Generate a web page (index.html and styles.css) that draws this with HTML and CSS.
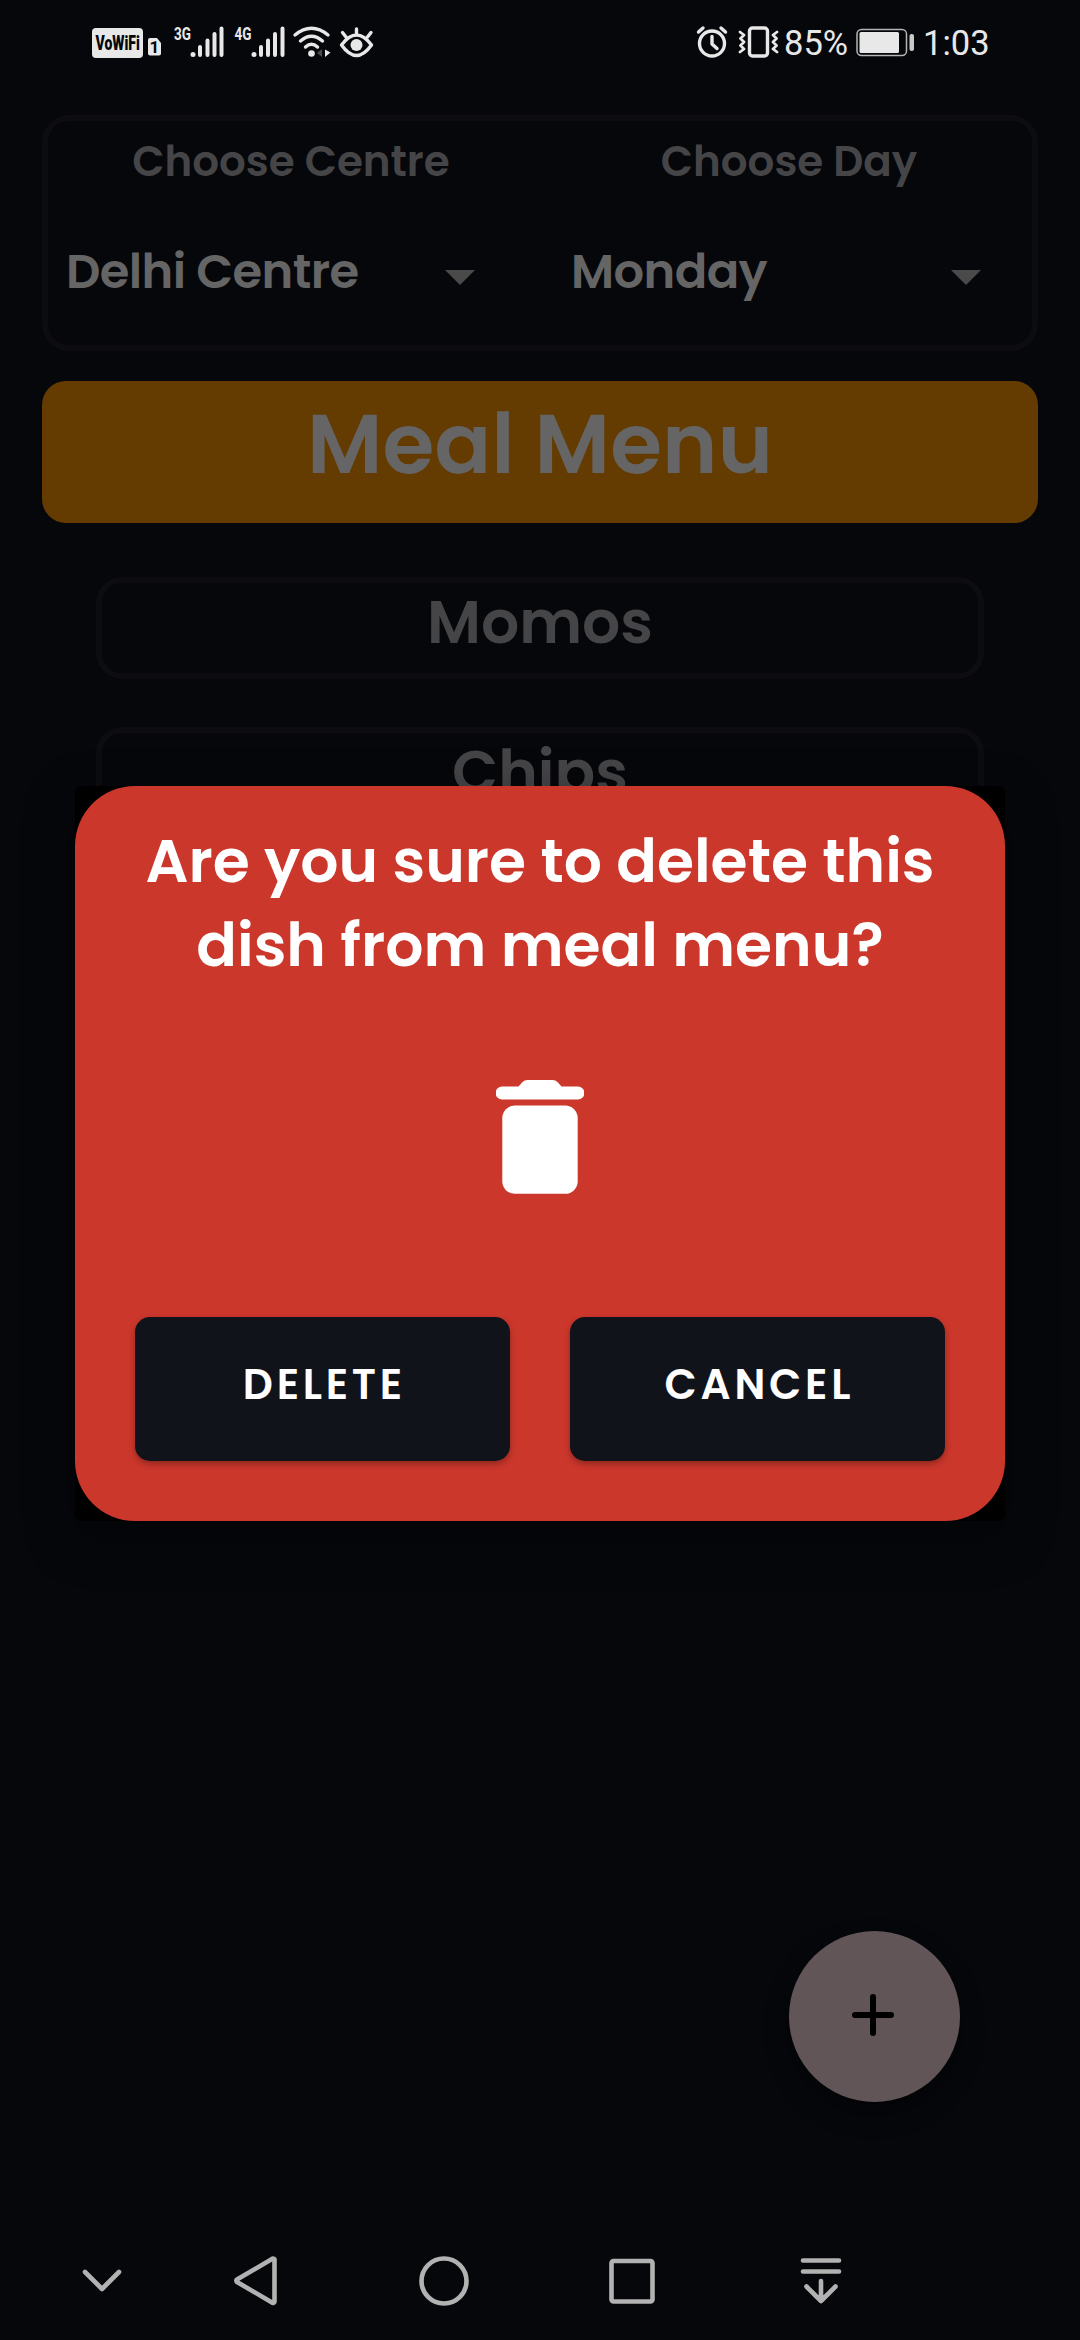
FILE: index.html
```html
<!DOCTYPE html>
<html lang="en">
<head>
<meta charset="utf-8">
<title>Meal Menu</title>
<link rel="stylesheet" href="styles.css">
</head>
<body>
<div class="screen">
  <header class="status">
    <div class="status-group">
      <div class="badge"><span class="badge-text">VoWiFi</span></div>
      <svg width="23" height="84" viewBox="143 0 23 84">
        <path d="M150 38h7l4 5v10.500a2 2 0 0 1-2 2h-9a2 2 0 0 1-2-2v-13.500a2 2 0 0 1 2-2z" fill="#e8e8e9"/>
        <text x="149.500" y="53" class="sim-text">1</text>
      </svg>
      <svg width="61" height="84" viewBox="166 0 61 84">
        <text x="174" y="40" class="net-text" textLength="17" lengthAdjust="spacingAndGlyphs">3G</text>
        <circle cx="193" cy="54.500" r="2.500" fill="#e8e8e9"/>
        <path d="M200 47v8M207.500 40.500v14.500M214.500 34v21M221.500 28.500v26.500" class="bars"/>
      </svg>
      <svg width="61" height="84" viewBox="227 0 61 84">
        <text x="234.500" y="40" class="net-text" textLength="17" lengthAdjust="spacingAndGlyphs">4G</text>
        <circle cx="254" cy="54.500" r="2.500" fill="#e8e8e9"/>
        <path d="M261 47v8M268 40.500v14.500M275 34v21M282.500 28.500v26.500" class="bars"/>
      </svg>
      <svg width="48" height="84" viewBox="288 0 48 84">
        <path d="M295 35q16.500-13.500 33 0M300.500 41q11-9.500 22 0M305.500 47q6-5.500 12 0" class="line"/>
        <circle cx="311.500" cy="53.500" r="3.300" fill="#e8e8e9"/>
        <path d="M317 53l5-4v8z" fill="#4a4a4c"/>
        <path d="M325 49.500l5.500 3-5.500 4.500z" fill="#e8e8e9"/>
      </svg>
      <svg width="48" height="84" viewBox="336 0 48 84">
        <path d="M341.500 45q7.500-10 15-10t15 10q-7.500 10.500-15 10.500t-15-10.500zM356.500 34v-5M346 37l-3.500-4.500M367.500 37l3.500-4.500" class="line"/>
        <circle cx="356.500" cy="45" r="6" fill="#e8e8e9"/>
      </svg>
    </div>
    <div class="status-group">
      <svg width="40" height="84" viewBox="692 0 40 84">
        <circle cx="712" cy="43.500" r="12.500" class="line"/>
        <path d="M698.500 32l4.500-4M725.500 32l-4.500-4M712 36.500v7.500l5 4.500" class="line"/>
      </svg>
      <svg width="52" height="84" viewBox="732 0 52 84">
        <rect x="749.500" y="28" width="18" height="28" rx="3" class="line"/>
        <path d="M740 32l4 3-3.500 3.500 3.500 3.500-3.500 3.500 3.500 3.500-4 3M777 32l-4 3 3.500 3.500-3.500 3.500 3.500 3.500-3.500 3.500 4 3" class="line zig"/>
      </svg>
      <span class="status-text battery-level">85%</span>
      <svg width="70" height="84" viewBox="850 0 70 84">
        <rect x="857" y="29.500" width="49.500" height="26" rx="4.500" fill="none" stroke="#b5b5b6" stroke-width="1.500"/>
        <rect x="859.500" y="32" width="39.500" height="21" rx="1.500" fill="#e8e8e9"/>
        <rect x="909.500" y="34" width="4.500" height="17" rx="2" fill="#c9c9ca"/>
      </svg>
      <span class="status-text clock">1:03</span>
    </div>
  </header>

  <main class="content">
    <section class="filters">
      <div class="filter">
        <div class="filter-label">Choose Centre</div>
        <div class="select"><span class="select-value">Delhi Centre</span><i class="caret"></i></div>
      </div>
      <div class="filter">
        <div class="filter-label">Choose Day</div>
        <div class="select day"><span class="select-value">Monday</span><i class="caret"></i></div>
      </div>
    </section>
    <h1 class="banner">Meal Menu</h1>
    <ul class="dishes">
      <li class="dish">Momos</li>
      <li class="dish">Chips</li>
    </ul>
  </main>

  <button class="fab" aria-label="Add dish">
    <svg width="44" height="44" viewBox="0 0 44 44"><path d="M22 4v36M4 22h36" stroke="#000" stroke-width="6" stroke-linecap="round"/></svg>
  </button>

  <nav class="navbar">
    <svg width="60" height="84" viewBox="72 2238 60 84"><path d="M85 2272l17 17 17-17"/></svg>
    <svg width="60" height="84" viewBox="226 2238 60 84"><path d="M274.500 2260.500v41a1.500 1.500 0 0 1-2.500 1l-35-20.500a1.500 1.500 0 0 1 0-2.500l35-20.500a1.500 1.500 0 0 1 2.500 1.500z"/></svg>
    <svg width="60" height="84" viewBox="414 2238 60 84"><circle cx="444" cy="2281" r="22.500"/></svg>
    <svg width="60" height="84" viewBox="602 2238 60 84"><rect x="611.500" y="2261" width="41" height="40.500" rx="2"/></svg>
    <svg width="60" height="84" viewBox="791 2238 60 84"><path d="M803 2260.500h36M803 2271.500h36M821 2281v20M806.500 2286.500l14.500 14.500 14.500-14.500"/></svg>
  </nav>

  <div class="dialog-window">
    <div class="dialog" role="dialog">
      <h2 class="dialog-title">Are you sure to delete this dish from meal menu?</h2>
      <svg class="trash" width="88" height="114" viewBox="0 0 88 114">
        <path d="M6 6.500h16.500l4-4.500q2-2 5-2h25q3 0 5 2l4 4.500h16.500a6.500 6.500 0 0 1 0 13h-76a6.500 6.500 0 0 1 0-13z" fill="#fff"/>
        <rect x="6.300" y="25.500" width="75.400" height="88.300" rx="12.500" fill="#fff"/>
      </svg>
      <div class="actions">
        <button class="action">DELETE</button>
        <button class="action">CANCEL</button>
      </div>
    </div>
  </div>
</div>
</body>
</html>
```
FILE: styles.css
```css
* {
  box-sizing: border-box;
}

body {
  margin: 0;
  background: #06070b;
  font-family: Poppins, Inter, "Open Sans", sans-serif;
  font-weight: 600;
}

.screen {
  position: relative;
  display: flex;
  flex-direction: column;
  width: 1080px;
  height: 2340px;
  overflow: hidden;
}

svg {
  display: block;
  flex: none;
}

/* Status bar */
.status {
  display: flex;
  justify-content: space-between;
  height: 84px;
  padding: 0 80px 0 92px;
}

.status-group {
  display: flex;
}

.status-text {
  font: 400 34.5px/86px Roboto, sans-serif;
  color: #e8e8e9;
}

.battery-level {
  width: 66px;
}

.clock {
  width: 80px;
  padding-left: 3px;
}

.badge {
  display: flex;
  align-items: center;
  justify-content: center;
  width: 51px;
  height: 30px;
  margin-top: 28px;
  border-radius: 4px;
  background: #e8e8e9;
}

.badge-text {
  font: 900 20px/30px Roboto, sans-serif;
  color: #06070b;
  transform: scaleX(0.7);
}

.sim-text {
  font: 700 17px Roboto, sans-serif;
  fill: #06070b;
}

.net-text {
  font: 700 18px Roboto, sans-serif;
  fill: #e8e8e9;
}

.bars,
.line {
  fill: none;
  stroke: #e8e8e9;
  stroke-width: 4;
  stroke-linecap: round;
}

.line {
  stroke-width: 3.4;
  stroke-linejoin: round;
}

.zig {
  stroke-width: 2.8;
}

/* Content */
.content {
  flex: 1;
  padding: 31px 42px 0;
}

.filters {
  display: grid;
  grid-template-columns: 1fr 1fr;
  height: 236px;
  padding-top: 17px;
  border-radius: 27px;
  box-shadow: inset 0 0 0 6px #0c0c11;
}

.filter {
  display: flex;
  flex-direction: column;
  gap: 44px;
}

.filter-label {
  font-size: 42px;
  line-height: 60px;
  text-align: center;
  color: #454547;
}

.select {
  display: flex;
  justify-content: space-between;
  align-items: center;
  height: 72px;
  padding: 0 65px 0 24px;
}

.select.day {
  padding: 0 57px 0 31px;
}

.select-value {
  font-size: 48px;
  line-height: 72px;
  letter-spacing: -0.6px;
  color: #656565;
}

.caret {
  margin-top: 11px;
  border: 15px solid transparent;
  border-top-color: #4a4a4a;
  border-bottom: 0;
}

.banner {
  height: 142px;
  margin: 30px 0 54px;
  border-radius: 24px;
  background: #643b00;
  color: #656565;
  font-size: 84px;
  font-weight: 600;
  line-height: 126px;
  text-align: center;
}

.dishes {
  display: flex;
  flex-direction: column;
  gap: 48px;
  margin: 0;
  padding: 0 54px;
  list-style: none;
}

.dish {
  height: 102px;
  border-radius: 26px;
  box-shadow: inset 0 0 0 6px #0c0c11;
  color: #454547;
  font-size: 60px;
  line-height: 90px;
  text-align: center;
}

/* Floating action button */
.fab {
  display: flex;
  align-items: center;
  justify-content: center;
  align-self: flex-end;
  width: 171px;
  height: 171px;
  margin: 0 120px 136px 0;
  padding: 0 3px 3px 0;
  border: 0;
  border-radius: 50%;
  background: #615558;
  box-shadow: 0 12px 24px rgba(0, 0, 0, 0.4);
}

/* System navigation */
.navbar {
  display: grid;
  grid-template-columns: 154px 188px 188px 189px 60px;
  height: 102px;
  padding-left: 72px;
  fill: none;
  stroke: #b2b2b2;
  stroke-width: 4.6;
  stroke-linecap: round;
  stroke-linejoin: round;
}

/* Confirmation dialog */
.dialog-window {
  position: absolute;
  top: 786px;
  left: 75px;
  width: 930px;
  height: 735px;
  border-radius: 7px;
  background: #000;
  box-shadow: 0 16px 50px rgba(0, 0, 0, 0.4);
}

.dialog {
  display: flex;
  flex-direction: column;
  align-items: center;
  height: 735px;
  padding: 33px 60px 60px;
  border-radius: 60px;
  background: #cc372c;
}

.dialog-title {
  margin: 0;
  color: #fff;
  font-size: 60px;
  font-weight: 600;
  line-height: 84px;
  text-align: center;
}

.trash {
  margin-top: 93px;
}

.actions {
  display: grid;
  grid-template-columns: 375px 375px;
  gap: 60px;
  margin-top: 123px;
}

.action {
  height: 144px;
  padding: 0 0 9px;
  border: 0;
  border-radius: 15px;
  background: #11131a;
  box-shadow: 0 3px 6px rgba(0, 0, 0, 0.3);
  color: #fff;
  font: inherit;
  font-size: 42px;
  line-height: 135px;
  letter-spacing: 3.75px;
  text-indent: 3.75px;
}
```
